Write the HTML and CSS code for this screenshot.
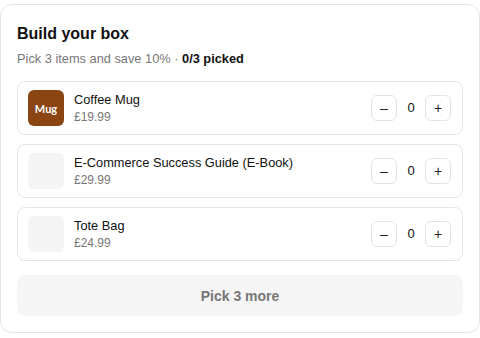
FILE: index.html
```html
<!DOCTYPE html>
<html lang="en">
<head>
<meta charset="utf-8">
<link rel="stylesheet" href="styles.css">
</head>
<body>
<div class="card">
  <h1 class="title">Build your box</h1>
  <p class="sub">Pick 3 items and save 10% · <strong>0/3 picked</strong></p>
  <div class="list">
    <div class="row">
      <div class="thumb mug">Mug</div>
      <div class="info">
        <div class="name">Coffee Mug</div>
        <div class="price">£19.99</div>
      </div>
      <div class="qty">
        <button class="qbtn">–</button>
        <span class="count">0</span>
        <button class="qbtn">+</button>
      </div>
    </div>
    <div class="row">
      <div class="thumb"></div>
      <div class="info">
        <div class="name">E-Commerce Success Guide (E-Book)</div>
        <div class="price">£29.99</div>
      </div>
      <div class="qty">
        <button class="qbtn">–</button>
        <span class="count">0</span>
        <button class="qbtn">+</button>
      </div>
    </div>
    <div class="row">
      <div class="thumb"></div>
      <div class="info">
        <div class="name">Tote Bag</div>
        <div class="price">£24.99</div>
      </div>
      <div class="qty">
        <button class="qbtn">–</button>
        <span class="count">0</span>
        <button class="qbtn">+</button>
      </div>
    </div>
  </div>
  <button class="cta">Pick 3 more</button>
</div>
</body>
</html>
```
FILE: styles.css
```css
* { box-sizing: border-box; }
html, body { margin: 0; background: #fff; }
body {
  padding: 4px 0 0 0;
  font-family: "Liberation Sans", Arial, sans-serif;
  color: #111;
}
.card {
  width: 480px;
  height: 329px;
  border: 1px solid #e3e3e3;
  border-radius: 12px;
  padding: 18px 16px 16px;
  display: flex;
  flex-direction: column;
}
.title {
  margin: 0;
  font-size: 16px;
  line-height: 22px;
  font-weight: 700;
  color: #111;
}
.sub {
  margin: 5px 0 0 0;
  font-size: 12.8px;
  line-height: 18px;
  color: #777;
}
.sub strong { color: #111; }
.list {
  margin-top: 13px;
  display: flex;
  flex-direction: column;
  gap: 9px;
}
.row {
  height: 54px;
  border: 1px solid #e6e6e6;
  border-radius: 8px;
  padding: 0 11px 0 10px;
  display: flex;
  align-items: center;
  gap: 10px;
}
.thumb {
  width: 36px;
  height: 36px;
  border-radius: 6px;
  background: #f4f4f4;
  flex: none;
}
.thumb.mug {
  background: #8b4513;
  color: #fff;
  font-family: Lato, "Liberation Sans", sans-serif;
  font-weight: 700;
  font-size: 11px;
  display: flex;
  align-items: center;
  justify-content: center;
}
.info { flex: 1; display: flex; flex-direction: column; gap: 2px; }
.name { font-size: 12.8px; line-height: 16px; color: #111; }
.price { font-size: 12px; line-height: 15px; color: #777; }
.qty { display: flex; align-items: center; gap: 0; }
.qbtn {
  width: 26px;
  height: 26px;
  border: 1px solid #e3e3e3;
  border-radius: 6px;
  background: #fff;
  color: #222;
  font-family: "Liberation Sans", Arial, sans-serif;
  font-size: 14px;
  padding: 0;
  display: flex;
  align-items: center;
  justify-content: center;
}
.count {
  width: 28px;
  text-align: center;
  font-size: 13px;
  color: #111;
  margin-top: -2px;
}
.cta {
  margin-top: 14px;
  height: 41px;
  border: none;
  border-radius: 8px;
  background: #f5f5f5;
  color: #777;
  font-family: "Liberation Sans", Arial, sans-serif;
  font-weight: 700;
  font-size: 14px;
  width: 100%;
}
```
